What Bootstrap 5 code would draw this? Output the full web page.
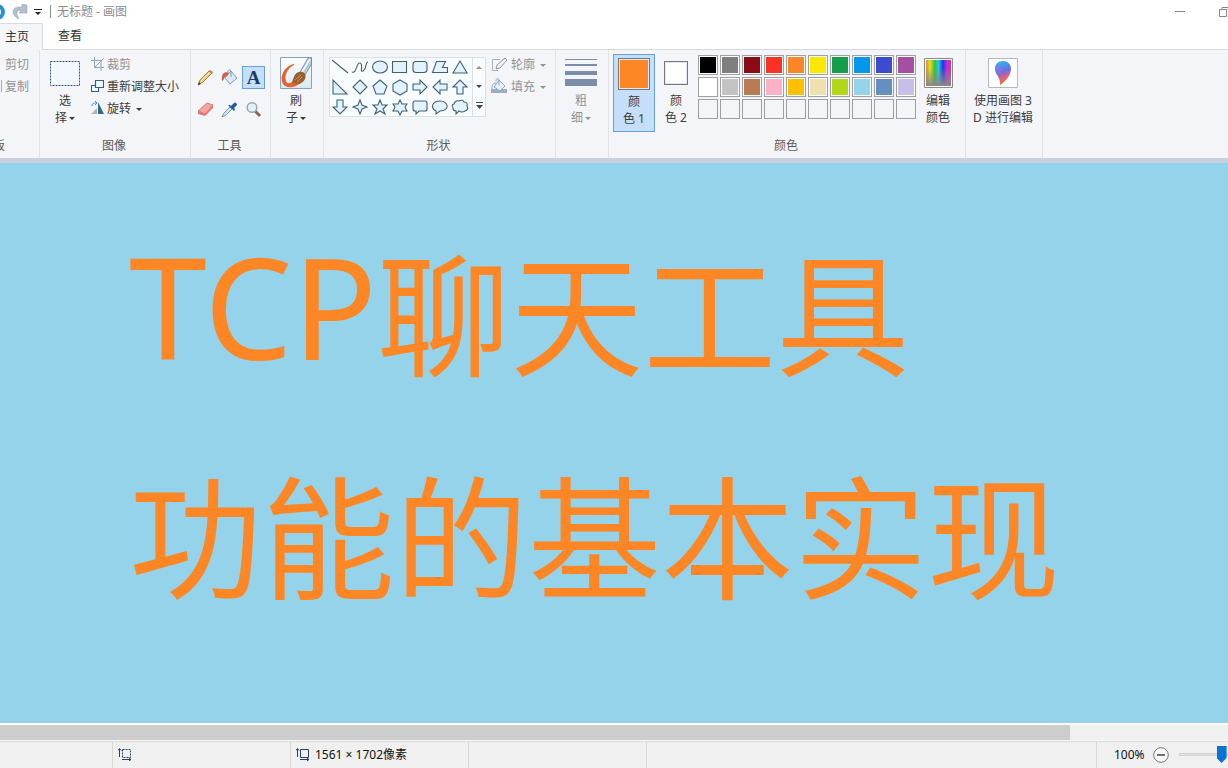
<!DOCTYPE html>
<html lang="zh-CN">
<head>
<meta charset="utf-8">
<meta name="viewport" content="width=device-width, initial-scale=1">
<title>无标题 - 画图</title>
<link href="https://cdn.jsdelivr.net/npm/bootstrap@5.3.0/dist/css/bootstrap.min.css" rel="stylesheet">
<style>
  body { font-family: "Noto Sans", "Noto Sans CJK SC", sans-serif; font-size: 12px; line-height: 17px; color: #3c3c3c; }
  button { background: none; border: 1px solid transparent; padding: 0; color: inherit; }
  button:disabled { color: #929292; }
  svg { display: block; flex: none; }
  .title-bar { height: 23px; color: #8c8c8c; }
  .title-bar button { border: 0; }
  .title-sep { width: 1px; height: 13px; background: #8f8f8f; margin: 0 6px 0 8px; }
  .tab-row { height: 27px; border-bottom: 1px solid #dadbdc; }
  .tab-row a { height: 27px; line-height: 25px; color: #333; padding: 0 11px; border: 0 solid #dadbdc; }
  .tab-row a.current { background: #f5f6f7; border-width: 1px 1px 0 0; padding: 0 13px 0 5px; }
  .ribbon { height: 108px; background: #f4f5f8; }
  .ribbon-group { flex: none; height: 108px; padding: 3px 0 4px; border-right: 1px solid #e1e2e5; }
  .group-label { height: 17px; color: #5a5a5a; overflow: hidden; white-space: nowrap; padding-right: 2px; }
  .g-clip { width: 40px; } .g-image { width: 151px; } .g-tools { width: 80px; } .g-brush { width: 53px; }
  .g-shape { width: 232px; } .g-size { width: 53px; } .g-color { width: 357px; } .g-3d { width: 77px; }
  .g-clip .group-label { padding-right: 34px; }
  .line-btn { height: 22px; display: flex; align-items: center; white-space: nowrap; gap: 3px; }
  .tall-btn { height: 78px; width: 42px; line-height: 17px; display: flex; flex-direction: column; align-items: center; white-space: nowrap; flex: none; }
  .tall-btn.w-100 { padding-right: 2px; }
  .icon-area { height: 38px; display: flex; align-items: center; justify-content: center; }
  .active-tool { background: #c5dffa; border-color: #66a1de; }
  .tall-btn.active-tool { margin-top: 1px; }
  .caret { display: inline-block; border: 3px solid transparent; border-top-color: currentColor; border-bottom: 0; vertical-align: 2px; margin-left: 2px; }
  .tool-grid { display: grid; grid-template-columns: repeat(3, 23px); grid-auto-rows: 23px; gap: 9px 1px; padding: 13px 0 0 3px; }
  .tool-grid button { width: 23px; height: 23px; display: flex; align-items: center; justify-content: center; }
  .text-glyph { font: bold 19px "Liberation Serif", serif; color: #203b63; }
  .shape-box { width: 157px; height: 60px; margin: 4px 0 0 5px; border: 1px solid #dcdfe4; background: #f8fcff; }
  .shape-grid { display: grid; grid-template-columns: repeat(7, 20px); grid-auto-rows: 20px; width: 143px; margin-top: -1px; }
  .shape-grid svg { fill: #e2f3fd; stroke: #3f6178; stroke-width: 1.1; }
  .shape-scroll { width: 13px; border-left: 1px solid #dcdfe4; color: #444; }
  .shape-scroll button { height: 19px; display: flex; flex-direction: column; align-items: center; justify-content: center; }
  .shape-scroll .caret { margin: 0; }
  .caret-up { rotate: 180deg; }
  .color-chip { display: block; width: 32px; height: 32px; background: #ff8624; border: 1px solid #777; box-shadow: inset 0 0 0 1px #dceaf6; }
  .chip-two { width: 24px; height: 24px; background: #fff; }
  .swatches { display: grid; grid-template-columns: repeat(10, 20px); grid-auto-rows: 20px; gap: 2px; padding-top: 2px; margin: 0 1px; }
  .swatches button { border: 1px solid #a0a0a0; padding: 1px; background-clip: content-box; box-shadow: inset 0 0 0 1px #fff; }
  .swatches button.blank { box-shadow: none; }
  .ribbon-edge { height: 5px; background: #c8d0e0; }
  .paint-area { background: #95d3eb; color: #ff8624; padding: 40px 0 0 129px; overflow: hidden; min-height: 0; font-size: 133px; line-height: 223px; white-space: nowrap; }
  .latin { font-size: 140px; line-height: 1; vertical-align: 6px; }
  .scroll-track { height: 18px; background: #f0f0f0; border: solid #fafafa; border-width: 2px 0 1px; }
  .scroll-thumb { width: 87.1%; background: #cdcdcd; }
  .status { height: 27px; background: #f0f0f0; border-top: 1px solid #d9d9d9; color: #111; overflow: hidden; }
  .status-cell { width: 178px; flex: none; border-right: 1px solid #d9d9d9; padding: 0 0 2px 5px; gap: 5px; }
  .status-first { width: 113px; }
  .zoom-cell { width: 132px; border-left: 1px solid #d9d9d9; padding: 0 0 1px 17px; gap: 7px; flex: none; overflow: hidden; }
  .zoom-slider { appearance: none; -webkit-appearance: none; background: none; width: 86px; flex: none; height: 20px; margin: 0 0 0 2px; }
  .zoom-slider::-webkit-slider-runnable-track { height: 3px; background: #e4e4e4; border: 1px solid #d0d0d0; }
  .zoom-slider::-webkit-slider-thumb { -webkit-appearance: none; width: 10px; height: 17px; margin-top: -8px; background: #0873d2; clip-path: polygon(0 0, 100% 0, 100% 70%, 50% 100%, 0 70%); }
</style>
</head>
<body class="vh-100 d-flex flex-column overflow-hidden bg-white">

<header class="title-bar d-flex align-items-center flex-shrink-0">
  <button aria-label="撤销"><svg width="10" height="16" viewBox="0 0 10 16"><circle cx="-3" cy="8" r="6" fill="none" stroke="#2b91cf" stroke-width="4"/></svg></button>
  <button aria-label="重做"><svg width="20" height="16" viewBox="0 0 20 16"><path d="M9 15C1 12 1 3 9 3h3V0l5 1v8H9l2-3c-5 0-5 4-2 9z" fill="#b3bfcc" stroke="#98a6b5" stroke-width=".6"/></svg></button>
  <button class="ms-1" aria-label="自定义快速访问工具栏"><svg width="8" height="9" viewBox="0 0 8 9"><path d="M0 2.500h8" stroke="#222"/><path d="M1 5h6L4 8z" fill="#222"/></svg></button>
  <span class="title-sep"></span>
  <span class="flex-grow-1">无标题 - 画图</span>
  <button aria-label="最小化"><svg width="12" height="14" viewBox="0 0 12 14"><path d="M1 6.500h10" stroke="#888"/></svg></button>
  <button class="ms-4" aria-label="还原"><svg class="ms-2" width="10" height="14" viewBox="0 0 10 14"><path d="M1.500 4.500h7v7h-7zM4 4V2.500h6" fill="none" stroke="#888"/></svg></button>
</header>

<nav class="tab-row d-flex flex-shrink-0">
  <a href="#" class="current text-decoration-none">主页</a>
  <a href="#" class="text-decoration-none ms-1">查看</a>
</nav>

<main class="d-flex flex-column flex-grow-1 overflow-hidden">
<div class="ribbon d-flex flex-shrink-0 overflow-hidden">
  <section class="ribbon-group g-clip d-flex flex-column">
    <div class="flex-grow-1">
      <button class="line-btn ps-1" disabled>剪切</button>
      <button class="line-btn" disabled><svg width="1" height="12"><path d="M0 0h1v12H0z" fill="#9aabba"/></svg>复制</button>
    </div>
    <div class="group-label d-flex justify-content-end">剪贴板</div>
  </section>

  <section class="ribbon-group g-image d-flex flex-column">
    <div class="flex-grow-1 d-flex ps-1">
      <button class="tall-btn"><span class="icon-area"><svg width="32" height="26" viewBox="0 0 32 26"><path d="M1.500 1.500h29v24h-29z" fill="#f3f8fe" stroke="#35568c" stroke-dasharray="2 1"/></svg></span><span>选</span><span>择<i class="caret"></i></span></button>
      <div class="ps-1">
        <button class="line-btn" disabled><svg width="13" height="14" viewBox="0 0 13 14"><path d="M3.500 0v10.500H13M0 3.500h10V14M3 11l10-10" fill="none" stroke="#8fa5bf"/></svg>裁剪</button>
        <button class="line-btn"><svg width="13" height="14" viewBox="0 0 13 14"><path d="M4.500 1.500h8v7h-8zM4 6.500H.500v6h7V9" fill="#f5faff" stroke="#2d6384" stroke-width="1.200"/></svg>重新调整大小</button>
        <button class="line-btn"><svg width="13" height="14" viewBox="0 0 13 14"><path d="M0 13h6V7z" fill="#b0b8bf"/><path d="M7 1v12h6z" fill="#2b6d92"/><path d="M1 5c0-3 2-3 4-3M4 0l2 2-2 2" fill="none" stroke="#4b8ab5"/></svg><span>旋转 <i class="caret"></i></span></button>
      </div>
    </div>
    <div class="group-label text-center">图像</div>
  </section>

  <section class="ribbon-group g-tools d-flex flex-column">
    <div class="tool-grid flex-grow-1 align-content-start">
      <button aria-label="铅笔"><svg width="17" height="17" viewBox="0 0 17 17"><path d="M1 16l2-5 9-9 3 2-9 9z" fill="#f3cb72" stroke="#8d6c3a" stroke-width=".8"/><path d="M12 2l1-1 3 2-1 2z" fill="#d47163"/><path d="M1 16l1-3 2 2z" fill="#333"/><path d="M4 12l8-8" stroke="#fff2bc"/></svg></button>
      <button aria-label="用颜色填充"><svg width="17" height="17" viewBox="0 0 17 17"><path d="M10 2l6 7-7 6-5-6z" fill="#d9eaf5" stroke="#69869f" stroke-width=".8"/><path d="M10 8V3c0-3-4-3-3 1" fill="none" stroke="#69869f" stroke-width=".8"/><path d="M8 4C4 2 0 4 1 12c3-1 1-4 5-5z" fill="#d3604b"/></svg></button>
      <button class="active-tool" aria-label="文本"><span class="text-glyph">A</span></button>
      <button aria-label="橡皮擦"><svg width="17" height="15" viewBox="0 0 17 15"><path d="M1 9l9-8 6 2-8 9z" fill="#f4a69a" stroke="#c96b62" stroke-width=".8"/><path d="M1 9l7 3v2l-7-2zM8 12l8-9v3l-8 8z" fill="#df7770"/></svg></button>
      <button aria-label="颜色选取器"><svg width="17" height="17" viewBox="0 0 17 17"><path d="M1 16l2-4 6-6 2 2-6 6z" fill="#d2e9f5" stroke="#557f9c" stroke-width=".8"/><path d="M7 4l6 6 1-2-1-1 3-3c0-2-2-3-3-2l-3 3-1-1z" fill="#245d9b"/></svg></button>
      <button aria-label="放大镜"><svg width="17" height="17" viewBox="0 0 17 17"><path d="M10 10l5 5" stroke="#8a6654" stroke-width="3"/><circle cx="7" cy="6.500" r="4.800" fill="#e3f2fa" stroke="#9aa7b2" stroke-width="1.500"/></svg></button>
    </div>
    <div class="group-label text-center">工具</div>
  </section>

  <section class="ribbon-group g-brush d-flex flex-column ps-1">
    <button class="tall-btn"><span class="icon-area"><svg width="32" height="32" viewBox="0 0 32 32"><defs><linearGradient id="bg" x2="0" y2="1"><stop stop-color="#fff"/><stop offset="1" stop-color="#d7e8f3"/></linearGradient></defs><path d="M.500.500h31v31H.500z" fill="url(#bg)" stroke="#8ba2b5"/><path d="M14 7C4 9-1 20 3 27c4 5 11 4 18-1l-8-2c-3 3-6 3-7 0C4 18 8 11 14 8z" fill="#e5622f"/><path d="M20 15l8-14h3.500v6L25 18z" fill="#b4cbd8" stroke="#617e91" stroke-width=".7"/><path d="M22 15l8-13" stroke="#f4fbff" stroke-width="1.500"/><path d="M12 25c2-4 2-9 7-10 5-1 8 3 6 7-2 5-8 6-13 3z" fill="#98612f"/><path d="M15 23l6-5M17 25l5-5" stroke="#c99559"/></svg></span><span>刷</span><span>子<i class="caret"></i></span></button>
  </section>

  <section class="ribbon-group g-shape d-flex flex-column">
    <div class="flex-grow-1 d-flex">
      <div class="shape-box d-flex">
        <div class="shape-grid" id="shapes"></div>
        <div class="shape-scroll">
          <button class="w-100" disabled aria-label="向上"><i class="caret caret-up"></i></button>
          <button class="w-100" aria-label="向下"><i class="caret"></i></button>
          <button class="w-100" aria-label="更多"><svg width="7" height="7"><path d="M0 .500h7" stroke="#444"/><path d="M0 3h7L3.500 7z" fill="#444"/></svg></button>
        </div>
      </div>
      <div class="ps-1">
        <button class="line-btn" disabled><svg width="17" height="16" viewBox="0 0 17 16"><path d="M9 3.500H1.500v11H7" fill="none" stroke="#a4aebc"/><path d="M5 13l1-4 8-7 2 2-7 8z" fill="#eef1f5" stroke="#8996a9"/></svg><span>轮廓 <i class="caret"></i></span></button>
        <button class="line-btn" disabled><svg width="17" height="16" viewBox="0 0 17 16"><path d="M0 11h16v4H0z" fill="#9dadc5"/><path d="M8 2l6 6-5 5-6-4z" fill="#e7eef6" stroke="#8fa4bd"/><path d="M8 7V2c0-2-3-2-3 1M5 5c-3 0-4 2-4 6" fill="none" stroke="#8fa4bd"/></svg><span>填充 <i class="caret"></i></span></button>
      </div>
    </div>
    <div class="group-label text-center">形状</div>
  </section>

  <section class="ribbon-group g-size ps-1">
    <button class="tall-btn" disabled><span class="icon-area"><svg width="32" height="28" viewBox="0 0 32 28" fill="#7b8da9"><path d="M0 0h32v1H0zM0 5h32v2H0zM0 12h32v4H0zM0 20h32v7H0z"/></svg></span><span>粗</span><span>细<i class="caret"></i></span></button>
  </section>

  <section class="ribbon-group g-color d-flex flex-column">
    <div class="flex-grow-1 d-flex ps-1">
      <button class="tall-btn active-tool"><span class="icon-area"><i class="color-chip"></i></span><span>颜</span><span>色 1</span></button>
      <button class="tall-btn"><span class="icon-area"><i class="color-chip chip-two"></i></span><span>颜</span><span>色 2</span></button>
      <div class="swatches align-content-start" id="swatches"></div>
      <button class="tall-btn"><span class="icon-area"><svg width="29" height="30" viewBox="0 0 29 30"><defs><linearGradient id="rainbow"><stop stop-color="#d98b39"/><stop offset=".160" stop-color="#ece014"/><stop offset=".350" stop-color="#35bd3f"/><stop offset=".500" stop-color="#20cce2"/><stop offset=".680" stop-color="#2631e4"/><stop offset=".850" stop-color="#d827df"/><stop offset="1" stop-color="#c83c64"/></linearGradient><linearGradient id="grey" x2="0" y2="1"><stop offset=".300" stop-color="#888" stop-opacity="0"/><stop offset="1" stop-color="#888"/></linearGradient></defs><path d="M.500.500h28v29H.500z" fill="#fff" stroke="#888"/><path d="M2 2h25v26H2z" fill="url(#rainbow)"/><path d="M2 2h25v26H2z" fill="url(#grey)"/></svg></span><span>编辑</span><span>颜色</span></button>
    </div>
    <div class="group-label text-center">颜色</div>
  </section>

  <section class="ribbon-group g-3d">
    <button class="tall-btn w-100"><span class="icon-area"><svg width="30" height="30" viewBox="0 0 30 30"><defs><linearGradient id="drop" x1=".300" y1="0" x2=".500" y2="1"><stop stop-color="#31b7f5"/><stop offset=".450" stop-color="#6570e7"/><stop offset=".680" stop-color="#d96088"/><stop offset="1" stop-color="#ef7927"/></linearGradient></defs><path d="M.500.500h29v29H.500z" fill="#fff" stroke="#b4b9be"/><path d="M15 3c-5 0-8 3-8 8 0 6 6 8 5 16 6-4 11-10 11-16 0-5-3-8-8-8z" fill="url(#drop)"/><path d="M10 16c-3-4-2-8 2-10-2 4 2 6 5 6-3 0-5 2-7 4z" fill="#b56bc9" opacity=".5"/></svg></span><span>使用画图 3</span><span>D 进行编辑</span></button>
  </section>
</div>
<div class="ribbon-edge flex-shrink-0"></div>

<div class="paint-area flex-grow-1">
  <div><span class="latin">TCP</span>聊天工具</div>
  <div>功能的基本实现</div>
</div>
<div class="scroll-track d-flex flex-shrink-0"><div class="scroll-thumb"></div></div>
</main>

<footer class="status d-flex flex-shrink-0">
  <div class="status-cell status-first"></div>
  <div class="status-cell d-flex align-items-center"><svg width="14" height="13" viewBox="0 0 14 13" fill="none" stroke="#26415f"><path d="M4.500 1.500h8v8h-8z" stroke-dasharray="2 1"/><path d="M1.500 1v8M0 2.500l1.500-2 1.500 2M4 11.500h9M11 10l2 1.500-2 1.500"/></svg></div>
  <div class="status-cell d-flex align-items-center"><svg width="14" height="13" viewBox="0 0 14 13" fill="none" stroke="#26415f"><path d="M4.500 1.500h8v8h-8z"/><path d="M1.500 1v8M0 2.500l1.500-2 1.500 2M4 11.500h9M11 10l2 1.500-2 1.500"/></svg><span>1561 × 1702像素</span></div>
  <div class="status-cell"></div>
  <div class="flex-grow-1"></div>
  <div class="zoom-cell d-flex align-items-center">
    <label for="zoom">100%</label>
    <button aria-label="缩小"><svg width="16" height="16" viewBox="0 0 16 16"><circle cx="8" cy="8" r="7.300" fill="#f8f8f8" stroke="#777"/><path d="M4 8h8" stroke="#444" stroke-width="1.500"/></svg></button>
    <input type="range" class="zoom-slider" id="zoom" min="0" max="100" value="50">
  </div>
</footer>

<script>
  const shapes = [
    ['直线', 'M2 3l16 13'], ['曲线', 'M2 15C7 17 6 5 10 6S9 16 13 14 15 5 18 5'], ['椭圆形', 'M2.500 10a7.500 6 0 1 0 15 0a7.500 6 0 1 0-15 0z'],
    ['矩形', 'M2.500 4.500h14v11h-14z'], ['圆角矩形', 'M6 4.500h8q3 0 3 3v5q0 3-3 3H6q-3 0-3-3v-5q0-3 3-3z'],
    ['多边形', 'M6.500 4.500h9l-3 6h5v5h-15z'], ['三角形', 'M10 4l7 12H3z'],
    ['直角三角形', 'M3 3v14h14z'], ['菱形', 'M10 3l7 7-7 7-7-7z'], ['五边形', 'M10 3l7 6-3 8H6L3 9z'],
    ['六边形', 'M10 3l7 4v7l-7 4-7-4V7z'], ['右箭头', 'M3 7h7V3l7 7-7 7v-4H3z'], ['左箭头', 'M17 7h-7V3l-7 7 7 7v-4h7z'],
    ['上箭头', 'M7 17v-7H3l7-7 7 7h-4v7z'], ['下箭头', 'M7 3v7H3l7 7 7-7h-4V3z'], ['四角星', 'M10 3l2 5 5 2-5 2-2 5-2-5-5-2 5-2z'],
    ['五角星', 'M10 3l2 5h5l-4 4 2 5-5-3-5 3 2-5-4-4h5z'], ['六角星', 'M10 3l2 4h5l-2 3 2 4h-5l-2 4-2-4H3l2-4-2-3h5z'],
    ['圆角矩形标注', 'M5 4h10q2 0 2 2v6q0 2-2 2H9l-3 3v-3H5q-2 0-2-2V6q0-2 2-2z'],
    ['椭圆形标注', 'M6 14C0 11 2 4 10 4c9 0 10 10 0 10l-4 3z'],
    ['云形标注', 'M6 14Q3 14 3 11 1 8 4 7 5 3 9 4q4-2 5 1 4 0 3 4 2 4-2 5-3 2-6 0l-3 3z']
  ];
  document.getElementById('shapes').innerHTML = shapes.map(([name, d], i) =>
    `<button aria-label="${name}" class="border-0"><svg width="20" height="20" viewBox="0 0 20 20"><path d="${d}"${i === 1 ? ' fill="none"' : ''}/></svg></button>`).join('');
  const colors = ['#000', '#7f7f7f', '#8b0a14', '#fa3223', '#ff8624', '#ffe800', '#159e49', '#0097ec', '#3c4bd0', '#a34fa2',
    '#fff', '#c3c3c3', '#bb7b52', '#ffb0c9', '#ffc000', '#efe1ad', '#b3d717', '#95d3eb', '#658fbf', '#c7bfe7'];
  document.getElementById('swatches').innerHTML = Array.from({ length: 30 }, (_, i) => colors[i]
    ? `<button aria-label="颜色 ${colors[i]}" style="background-color:${colors[i]}"></button>`
    : '<button class="blank" aria-label="自定义颜色"></button>').join('');
</script>
<script src="https://cdn.jsdelivr.net/npm/bootstrap@5.3.0/dist/js/bootstrap.bundle.min.js"></script>
</body>
</html>
